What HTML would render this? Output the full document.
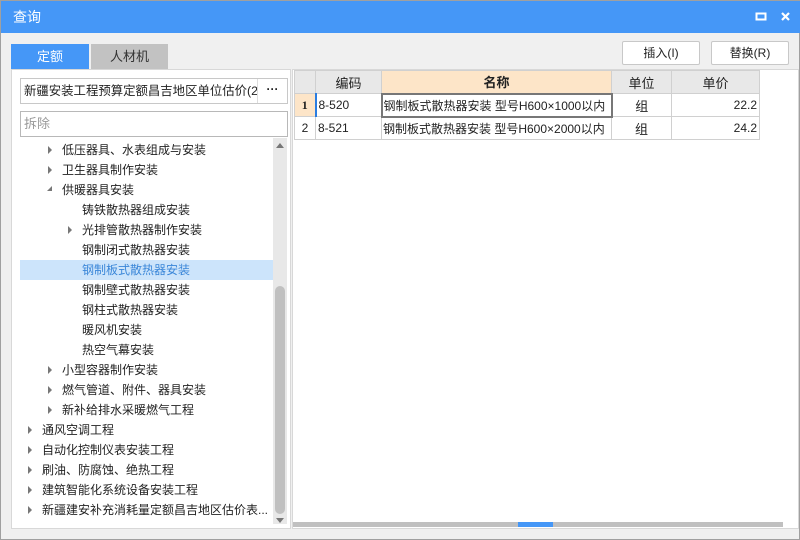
<!DOCTYPE html><html><head><meta charset="utf-8"><style>
*{box-sizing:border-box;margin:0;padding:0}
body{width:800px;height:540px;background:#f0f0f0;font-family:"Liberation Sans","Noto Sans CJK SC",sans-serif;font-size:12px;color:#222;position:relative;overflow:hidden;border:1px solid #a0a0a0}
.a{position:absolute}
.title{left:0;top:0;width:800px;height:32px;background:#4597f7;color:#fff;font-size:14px;line-height:32px;padding-left:12px}
.tab{top:43px;height:25px;line-height:25px;text-align:center;font-size:13px}
.btn{top:40px;height:24px;width:78px;background:#fff;border:1px solid #c8c8c8;border-radius:2px;text-align:center;line-height:22px;font-size:12px}
.tree div{position:absolute;height:20px;line-height:20px;font-size:12px;white-space:nowrap}
.tri{position:absolute;width:0;height:0;border-left:4px solid #777;border-top:4px solid transparent;border-bottom:4px solid transparent}
table{border-collapse:collapse;position:absolute;left:293px;top:69px;font-size:12px;table-layout:fixed;width:465px}
td{border:1px solid #d0d0d0;height:23px;padding:0 2px;white-space:nowrap;overflow:hidden}
.h td{background:#e8e8e8;text-align:center;font-size:13px}
</style></head><body>
<div class="a title">查询</div>
<svg class="a" style="left:750px;top:8px" width="46" height="16"><rect x="5.5" y="4.5" width="9" height="6" fill="none" stroke="#fff" stroke-width="2"/><path d="M31 4 L38 11 M38 4 L31 11" stroke="#fff" stroke-width="2.2"/></svg>
<div class="a tab" style="left:10px;width:78px;background:#4597f7;color:#fff">定额</div>
<div class="a tab" style="left:90px;width:77px;background:#c2c2c2;color:#333">人材机</div>
<div class="a btn" style="left:621px">插入(I)</div>
<div class="a btn" style="left:710px">替换(R)</div>
<div class="a" style="left:10px;top:68px;width:280px;height:460px;background:#fff;border:1px solid #d8d8d8"></div>
<div class="a" style="left:19px;top:77px;width:268px;height:26px;border:1px solid #c8c8c8;background:#fff;line-height:24px;padding-left:3px;font-size:12.4px;overflow:hidden;white-space:nowrap">新疆安装工程预算定额昌吉地区单位估价(20</div>
<div class="a" style="left:256px;top:78px;width:30px;height:24px;background:#fff;border-left:1px solid #ddd;text-align:center;line-height:20px;font-weight:bold">···</div>
<div class="a" style="left:19px;top:110px;width:268px;height:26px;border:1px solid #b8b8b8;background:#fff;line-height:24px;padding-left:3px;color:#999;font-size:13px">拆除</div>
<div class="a" style="left:19px;top:259px;width:253px;height:20px;background:#cce4fb"></div>
<div class="a" style="left:272px;top:137px;width:14px;height:386px;background:#e8e8e8"></div>
<div class="a" style="left:274px;top:285px;width:10px;height:228px;background:#c0c0c0;border-radius:5px"></div>
<div class="a" style="left:275px;top:142px;border-bottom:5px solid #777;border-left:4px solid transparent;border-right:4px solid transparent"></div>
<div class="a" style="left:275px;top:517px;border-top:5px solid #777;border-left:4px solid transparent;border-right:4px solid transparent"></div>
<div class="tree">
<span class="tri" style="left:47px;top:145px"></span><div style="left:61px;top:139px">低压器具、水表组成与安装</div>
<span class="tri" style="left:47px;top:165px"></span><div style="left:61px;top:159px">卫生器具制作安装</div>
<span class="a" style="left:46px;top:185px;border-right:5px solid #777;border-top:5px solid transparent"></span><div style="left:61px;top:179px">供暖器具安装</div>
<div style="left:81px;top:199px">铸铁散热器组成安装</div>
<span class="tri" style="left:67px;top:225px"></span><div style="left:81px;top:219px">光排管散热器制作安装</div>
<div style="left:81px;top:239px">钢制闭式散热器安装</div>
<div style="left:81px;top:259px;color:#3a86d8">钢制板式散热器安装</div>
<div style="left:81px;top:279px">钢制壁式散热器安装</div>
<div style="left:81px;top:299px">钢柱式散热器安装</div>
<div style="left:81px;top:319px">暖风机安装</div>
<div style="left:81px;top:339px">热空气幕安装</div>
<span class="tri" style="left:47px;top:365px"></span><div style="left:61px;top:359px">小型容器制作安装</div>
<span class="tri" style="left:47px;top:385px"></span><div style="left:61px;top:379px">燃气管道、附件、器具安装</div>
<span class="tri" style="left:47px;top:405px"></span><div style="left:61px;top:399px">新补给排水采暖燃气工程</div>
<span class="tri" style="left:27px;top:425px"></span><div style="left:41px;top:419px">通风空调工程</div>
<span class="tri" style="left:27px;top:445px"></span><div style="left:41px;top:439px">自动化控制仪表安装工程</div>
<span class="tri" style="left:27px;top:465px"></span><div style="left:41px;top:459px">刷油、防腐蚀、绝热工程</div>
<span class="tri" style="left:27px;top:485px"></span><div style="left:41px;top:479px">建筑智能化系统设备安装工程</div>
<span class="tri" style="left:27px;top:505px"></span><div style="left:41px;top:499px">新疆建安补充消耗量定额昌吉地区估价表...</div>
</div>
<div class="a" style="left:291px;top:68px;width:507px;height:460px;background:#fff;border:1px solid #d8d8d8"></div>
<table>
<col style="width:21px"><col style="width:66px"><col style="width:230px"><col style="width:60px"><col style="width:88px">
<tr class="h"><td></td><td>编码</td><td style="background:#fde5c8;font-weight:bold">名称</td><td>单位</td><td>单价</td></tr>
<tr><td style="background:#fde5c8;text-align:center;font-weight:bold;font-family:'Liberation Serif',serif;padding:0">1</td><td style="border-left:2px solid #2a7de1">8-520</td><td style="border:2px solid #777;font-size:12px;padding:0 1px">钢制板式散热器安装 型号H600×1000以内</td><td style="text-align:center;font-size:13px">组</td><td style="text-align:right">22.2</td></tr>
<tr><td style="text-align:center;padding:0">2</td><td>8-521</td><td style="font-size:12px;padding:0 1px">钢制板式散热器安装 型号H600×2000以内</td><td style="text-align:center;font-size:13px">组</td><td style="text-align:right">24.2</td></tr>
</table>
<div class="a" style="left:292px;top:521px;width:490px;height:5px;background:#c0c0c0"></div>
<div class="a" style="left:517px;top:521px;width:35px;height:5px;background:#4597f7"></div>
</body></html>
